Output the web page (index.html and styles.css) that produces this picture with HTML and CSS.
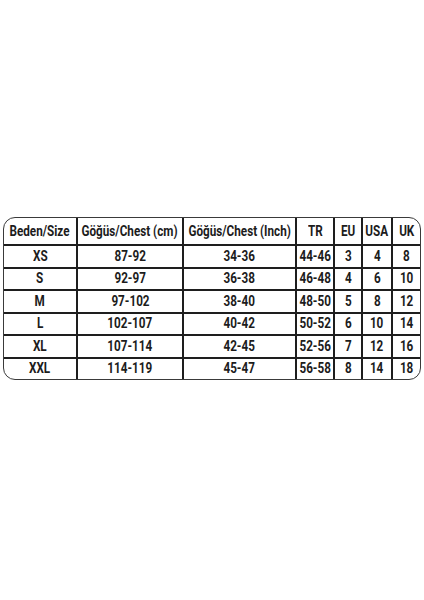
FILE: index.html
```html
<!DOCTYPE html>
<html>
<head>
<meta charset="utf-8">
<link rel="stylesheet" href="styles.css">
</head>
<body>
<div class="page">
  <div class="chart">
    <table class="sizes">
      <colgroup>
        <col class="c1"><col class="c2"><col class="c3"><col class="c4"><col class="c5"><col class="c6"><col class="c7">
      </colgroup>
      <thead>
        <tr class="head">
          <th><span>Beden/Size</span></th><th><span>Göğüs/Chest (cm)</span></th><th><span>Göğüs/Chest (Inch)</span></th><th><span>TR</span></th><th><span>EU</span></th><th><span>USA</span></th><th><span>UK</span></th>
        </tr>
      </thead>
      <tbody>
        <tr><td><span>XS</span></td><td><span>87-92</span></td><td><span>34-36</span></td><td><span>44-46</span></td><td><span>3</span></td><td><span>4</span></td><td><span>8</span></td></tr>
        <tr><td><span>S</span></td><td><span>92-97</span></td><td><span>36-38</span></td><td><span>46-48</span></td><td><span>4</span></td><td><span>6</span></td><td><span>10</span></td></tr>
        <tr><td><span>M</span></td><td><span>97-102</span></td><td><span>38-40</span></td><td><span>48-50</span></td><td><span>5</span></td><td><span>8</span></td><td><span>12</span></td></tr>
        <tr><td><span>L</span></td><td><span>102-107</span></td><td><span>40-42</span></td><td><span>50-52</span></td><td><span>6</span></td><td><span>10</span></td><td><span>14</span></td></tr>
        <tr><td><span>XL</span></td><td><span>107-114</span></td><td><span>42-45</span></td><td><span>52-56</span></td><td><span>7</span></td><td><span>12</span></td><td><span>16</span></td></tr>
        <tr><td><span>XXL</span></td><td><span>114-119</span></td><td><span>45-47</span></td><td><span>56-58</span></td><td><span>8</span></td><td><span>14</span></td><td><span>18</span></td></tr>
      </tbody>
    </table>
  </div>
</div>
</body>
</html>
```

FILE: styles.css
```css
html, body {
  margin: 0;
  padding: 0;
  background: #ffffff;
}
.page {
  width: 424px;
  height: 600px;
  padding-top: 217px;
  box-sizing: border-box;
}
.chart {
  margin: 0 3px 0 3px;
  border: 1.5px solid #3a3a3a;
  border-radius: 12px;
  overflow: hidden;
}
.sizes {
  width: 100%;
  border-collapse: collapse;
  table-layout: fixed;
  font-family: Roboto, "Liberation Sans", sans-serif;
  font-size: 15px;
  font-weight: 700;
  color: #1c1c1c;
}
.c1 { width: 73px; }
.c2 { width: 106px; }
.c3 { width: 113px; }
.c4 { width: 38px; }
.c5 { width: 28px; }
.c6 { width: 30px; }
.c7 { width: 28px; }
.sizes th, .sizes td {
  border: 2px solid #1e1e1e;
  text-align: center;
  padding: 0;
  white-space: nowrap;
  line-height: 1;
}
.sizes th {
  font-weight: 700;
  height: 26px;
  border-top: none;
}
.sizes td {
  height: 20.5px;
}
.sizes span {
  display: inline-block;
  margin: 0 -40px;
  transform: scaleX(0.78);
  transform-origin: 50% 50%;
}
.sizes tr:last-child td { border-bottom: none; }
.sizes th:first-child, .sizes td:first-child { border-left: none; }
.sizes th:last-child, .sizes td:last-child { border-right: none; }
```
